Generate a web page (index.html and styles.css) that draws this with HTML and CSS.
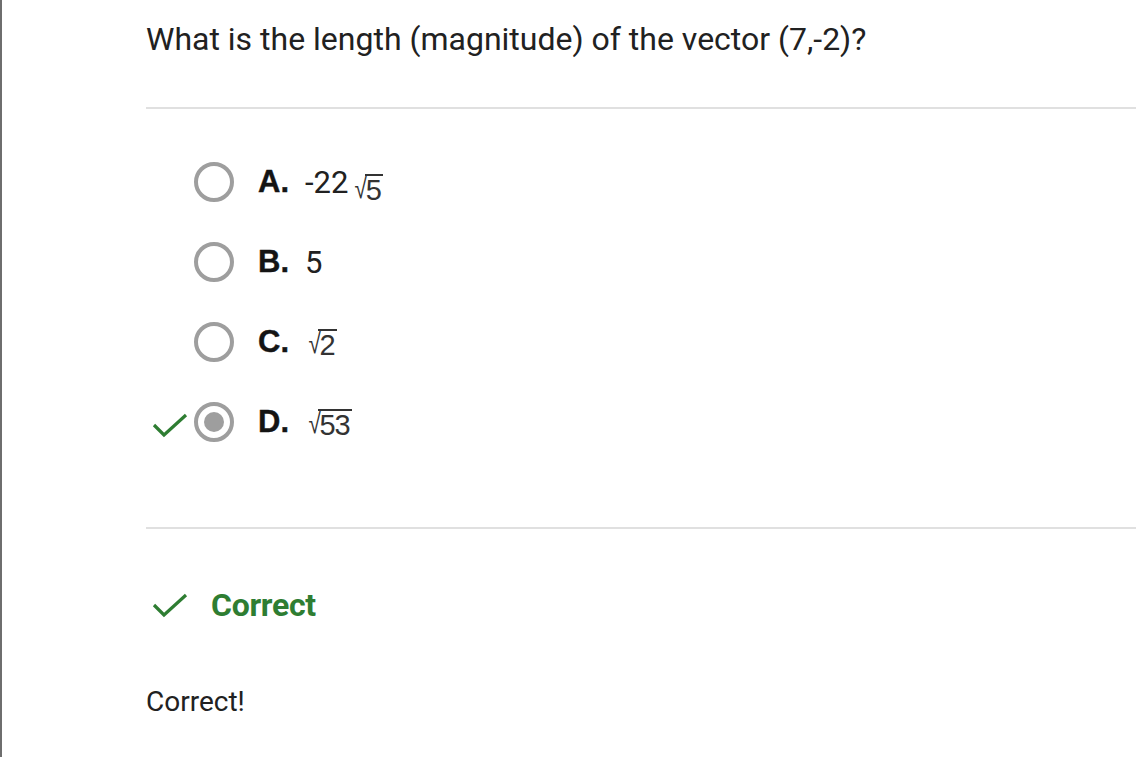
FILE: index.html
```html
<!DOCTYPE html>
<html>
<head>
<meta charset="utf-8">
<link rel="stylesheet" href="styles.css">
</head>
<body>
<div class="page">
  <div class="content">
    <div class="question">What is the length (magnitude) of the vector (7,-2)?</div>
    <hr class="divider">
    <div class="options">
      <div class="option">
        <div class="mark"></div>
        <div class="radio"></div>
        <div class="letter">A.</div>
        <div class="value">-22<span class="sqrt"><span class="rad">√</span><span class="arg">5</span></span></div>
      </div>
      <div class="option">
        <div class="mark"></div>
        <div class="radio"></div>
        <div class="letter">B.</div>
        <div class="value plain">5</div>
      </div>
      <div class="option">
        <div class="mark"></div>
        <div class="radio"></div>
        <div class="letter">C.</div>
        <div class="value"><span class="sqrt first"><span class="rad">√</span><span class="arg">2</span></span></div>
      </div>
      <div class="option">
        <div class="mark">
          <svg viewBox="0 0 36 26" width="36" height="26"><path d="M2 13 L12 23 L34 3" fill="none" stroke="#2e7d32" stroke-width="3.2"/></svg>
        </div>
        <div class="radio checked"></div>
        <div class="letter">D.</div>
        <div class="value"><span class="sqrt first"><span class="rad">√</span><span class="arg">53</span></span></div>
      </div>
    </div>
    <hr class="divider">
    <div class="result">
      <svg viewBox="0 0 36 26" width="36" height="26"><path d="M2 13 L12 23 L34 3" fill="none" stroke="#2e7d32" stroke-width="3.2"/></svg>
      <span class="result-text">Correct</span>
    </div>
    <div class="feedback">Correct!</div>
  </div>
</div>
</body>
</html>
```

FILE: styles.css
```css
html, body {
  margin: 0;
  padding: 0;
  background: #ffffff;
}
.page {
  border-left: 2px solid #6e6e6e;
  min-height: 757px;
  box-sizing: border-box;
}
.content {
  padding-left: 144px;
  font-family: Roboto, "Liberation Sans", sans-serif;
  color: #212121;
}
.question {
  font-size: 32px;
  line-height: 38px;
  padding-top: 20px;
}
.divider {
  margin: 0;
  border: 0;
  height: 2px;
  background: #e0e0e0;
}
.question + .divider {
  margin-top: 49px;
}
.options {
  padding: 33px 0 65px;
}
.option {
  display: flex;
  align-items: center;
  height: 80px;
}
.mark {
  width: 48px;
  display: flex;
  align-items: center;
  padding-left: 6px;
  padding-top: 6px;
  box-sizing: border-box;
}
.radio {
  width: 40px;
  height: 40px;
  box-sizing: border-box;
  border: 4px solid #9e9e9e;
  border-radius: 50%;
  display: flex;
  align-items: center;
  justify-content: center;
}
.radio.checked::after {
  content: "";
  width: 20px;
  height: 20px;
  border-radius: 50%;
  background: #9e9e9e;
}
.letter {
  margin-left: 24px;
  width: 47px;
  font-family: "Liberation Sans", Arial, sans-serif;
  font-weight: bold;
  font-size: 31px;
  color: #141414;
  -webkit-text-stroke: 0.4px #141414;
}
.value {
  font-family: Roboto, "Liberation Sans", sans-serif;
  font-size: 31px;
  color: #212121;
  display: flex;
  align-items: flex-end;
}
.sqrt {
  display: inline-flex;
  align-items: flex-end;
  font-family: "Liberation Sans", Arial, sans-serif;
  color: #333;
  margin-left: 5px;
  margin-bottom: -3px;
}
.sqrt.first {
  margin-left: 2px;
}
.rad {
  font-size: 28px;
  line-height: 30px;
  transform: scaleX(0.8);
  margin-right: -4px;
}
.arg {
  font-size: 29px;
  line-height: 28px;
  border-top: 2px solid #333;
  padding: 0 2px 0 1px;
  letter-spacing: -1px;
}
.result {
  display: flex;
  align-items: center;
  height: 48px;
  margin-top: 52px;
  padding-left: 6px;
}
.result svg {
  width: 36px;
  height: 26px;
}
.result-text {
  margin-left: 23px;
  font-family: Roboto, sans-serif;
  font-weight: bold;
  font-size: 32px;
  color: #2e7d32;
  letter-spacing: -0.3px;
}
.feedback {
  margin-top: 55px;
  font-size: 28px;
  line-height: 36px;
}
```
